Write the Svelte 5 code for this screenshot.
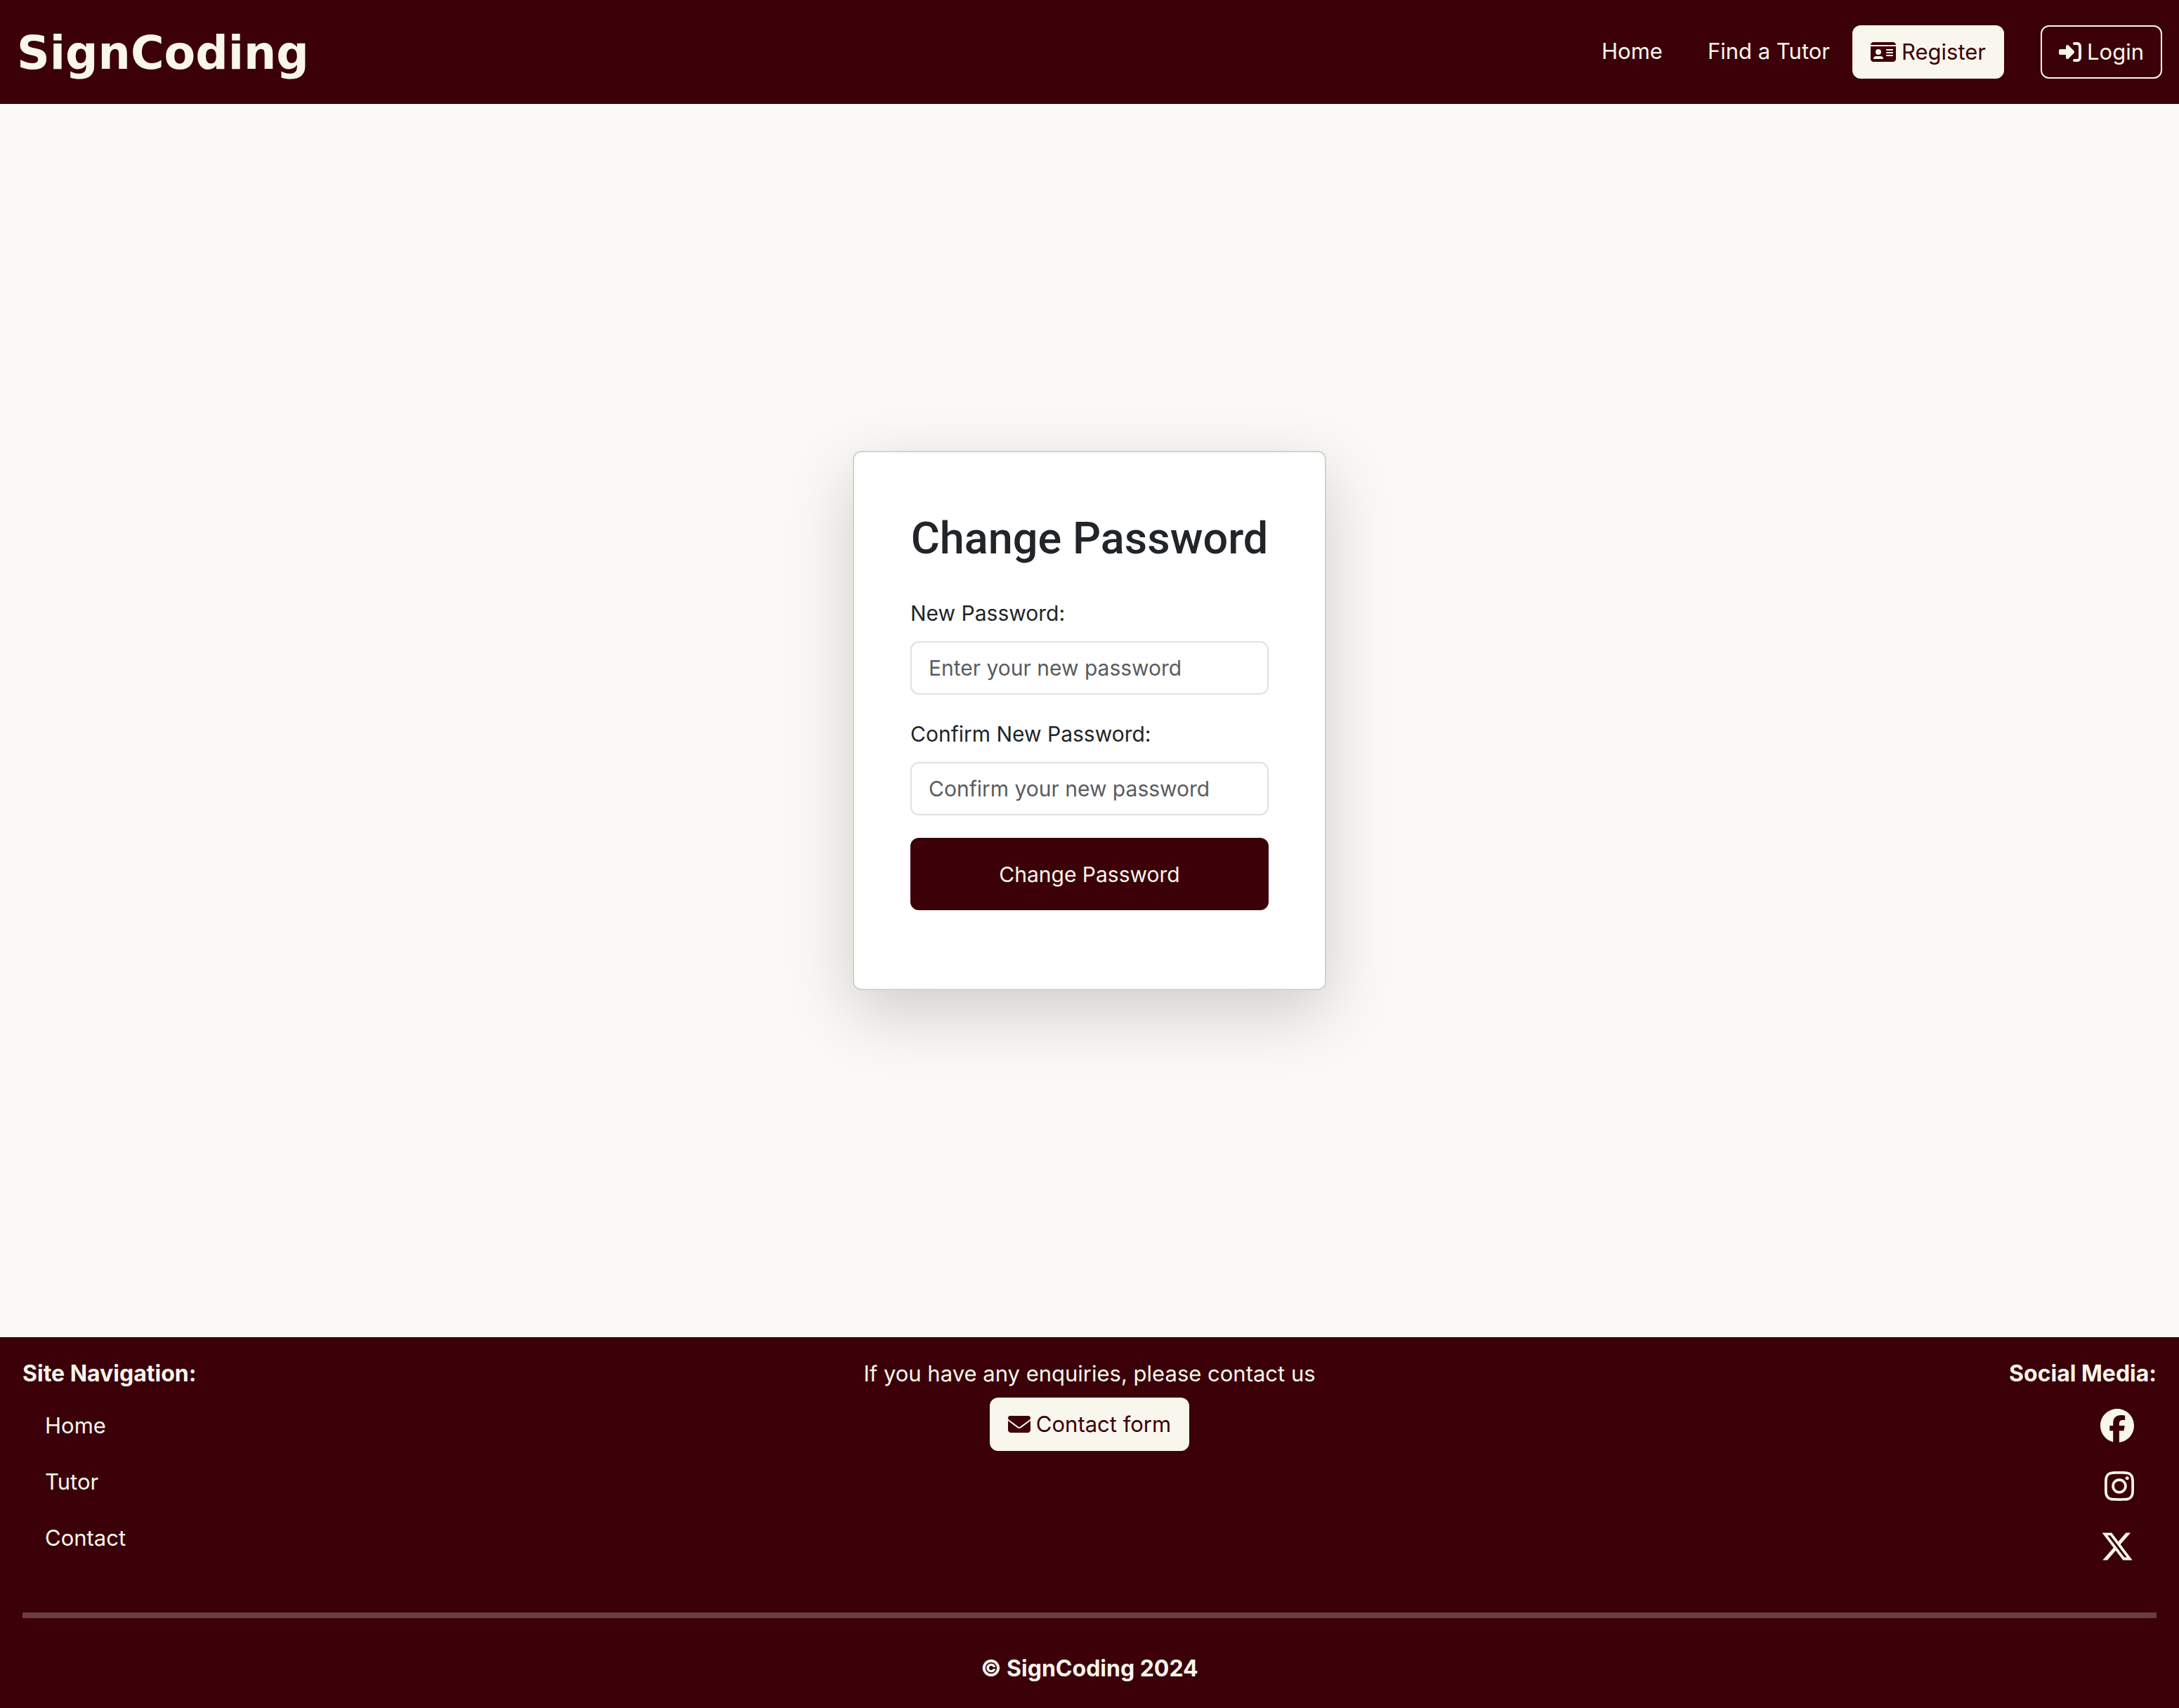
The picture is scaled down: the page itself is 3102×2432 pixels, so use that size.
<script>
  const footerLinks = ['Home', 'Tutor', 'Contact'];

  const socials = [
    {
      name: 'Facebook',
      viewBox: '0 0 512 512',
      path: 'M512 256C512 114.6 397.4 0 256 0S0 114.6 0 256C0 376 82.7 476.8 194.2 504.5V334.2H141.4V256h52.8V222.3c0-87.1 39.4-127.5 125-127.5c16.2 0 44.2 3.2 55.7 6.4V172c-6-.6-16.5-1-29.6-1c-42 0-58.2 15.9-58.2 57.2V256h83.6l-14.4 78.2H287V510.1C413.8 494.8 512 386.9 512 256h0z'
    },
    {
      name: 'Instagram',
      viewBox: '0 0 448 512',
      path: 'M224.1 141c-63.6 0-114.9 51.3-114.9 114.9s51.3 114.9 114.9 114.9S339 319.5 339 255.9 287.7 141 224.1 141zm0 189.6c-41.1 0-74.7-33.5-74.7-74.7s33.5-74.7 74.7-74.7 74.7 33.5 74.7 74.7-33.6 74.7-74.7 74.7zm146.4-194.3c0 14.9-12 26.8-26.8 26.8-14.9 0-26.8-12-26.8-26.8s12-26.8 26.8-26.8 26.8 12 26.8 26.8zm76.1 27.2c-1.7-35.9-9.9-67.7-36.2-93.9-26.2-26.2-58-34.4-93.9-36.2-37-2.1-147.9-2.1-184.9 0-35.8 1.7-67.6 9.9-93.9 36.1s-34.4 58-36.2 93.9c-2.1 37-2.1 147.9 0 184.9 1.7 35.9 9.9 67.7 36.2 93.9s58 34.4 93.9 36.2c37 2.1 147.9 2.1 184.9 0 35.9-1.7 67.7-9.9 93.9-36.2 26.2-26.2 34.4-58 36.2-93.9 2.1-37 2.1-147.8 0-184.8zM398.8 388c-7.8 19.6-22.9 34.7-42.6 42.6-29.5 11.7-99.5 9-132.1 9s-102.7 2.6-132.1-9c-19.6-7.8-34.7-22.9-42.6-42.6-11.7-29.5-9-99.5-9-132.1s-2.6-102.7 9-132.1c7.8-19.6 22.9-34.7 42.6-42.6 29.5-11.7 99.5-9 132.1-9s102.7-2.6 132.1 9c19.6 7.8 34.7 22.9 42.6 42.6 11.7 29.5 9 99.5 9 132.1s2.7 102.7-9 132.1z'
    },
    {
      name: 'X',
      viewBox: '0 0 512 512',
      path: 'M389.2 48h70.6L305.6 224.2 487 464H345L233.7 318.6 106.5 464H35.8L200.7 275.5 26.8 48H172.4L272.9 180.9 389.2 48zM364.4 421.8h39.1L151.1 88h-42L364.4 421.8z'
    }
  ];
</script>

<div class="page">
  <header>
    <a class="brand" href="#home">SignCoding</a>
    <nav aria-label="Main">
      <a class="nav-link" href="#home">Home</a>
      <a class="nav-link" href="#tutors">Find a Tutor</a>
      <a class="btn solid" href="#register">
        <svg viewBox="0 0 576 512" aria-hidden="true"><path d="M0 96l576 0c0-35.3-28.7-64-64-64L64 32C28.7 32 0 60.7 0 96zm0 32L0 416c0 35.3 28.7 64 64 64l448 0c35.3 0 64-28.7 64-64l0-288L0 128zM64 405.3c0-29.5 23.9-53.3 53.3-53.3l117.3 0c29.5 0 53.3 23.9 53.3 53.3c0 5.9-4.8 10.7-10.7 10.7L74.7 416c-5.9 0-10.7-4.8-10.7-10.7zM176 192a64 64 0 1 1 0 128 64 64 0 1 1 0-128zm176 16c0-8.8 7.2-16 16-16l128 0c8.8 0 16 7.2 16 16s-7.2 16-16 16l-128 0c-8.8 0-16-7.2-16-16zm0 64c0-8.8 7.2-16 16-16l128 0c8.8 0 16 7.2 16 16s-7.2 16-16 16l-128 0c-8.8 0-16-7.2-16-16zm0 64c0-8.8 7.2-16 16-16l128 0c8.8 0 16 7.2 16 16s-7.2 16-16 16l-128 0c-8.8 0-16-7.2-16-16z" /></svg>
        <span>Register</span>
      </a>
      <a class="btn outline" href="#login">
        <svg viewBox="0 0 512 512" aria-hidden="true"><path d="M217.9 105.9L340.7 228.7c7.2 7.2 11.3 17.1 11.3 27.3s-4.1 20.1-11.3 27.3L217.9 406.1c-6.4 6.4-15 9.9-24 9.9c-18.7 0-33.9-15.2-33.9-33.9l0-62.1L32 320c-17.7 0-32-14.3-32-32l0-64c0-17.7 14.3-32 32-32l128 0 0-62.1c0-18.7 15.2-33.9 33.9-33.9c9 0 17.6 3.6 24 9.9zM352 416l64 0c17.7 0 32-14.3 32-32l0-256c0-17.7-14.3-32-32-32l-64 0c-17.7 0-32-14.3-32-32s14.3-32 32-32l64 0c53 0 96 43 96 96l0 256c0 53-43 96-96 96l-64 0c-17.7 0-32-14.3-32-32s14.3-32 32-32z" /></svg>
        <span>Login</span>
      </a>
    </nav>
  </header>

  <main>
    <form class="card">
      <h1>Change Password</h1>
      <div class="field">
        <label for="new-password">New Password:</label>
        <input id="new-password" type="password" placeholder="Enter your new password" />
      </div>
      <div class="field">
        <label for="confirm-password">Confirm New Password:</label>
        <input id="confirm-password" type="password" placeholder="Confirm your new password" />
      </div>
      <button type="submit">Change Password</button>
    </form>
  </main>

  <footer>
    <div class="columns">
      <nav class="site-nav" aria-labelledby="site-nav-title">
        <h2 id="site-nav-title">Site Navigation:</h2>
        <ul>
          {#each footerLinks as link}
            <li><a href={`#${link.toLowerCase()}`}>{link}</a></li>
          {/each}
        </ul>
      </nav>
      <div class="contact">
        <p>If you have any enquiries, please contact us</p>
        <a class="btn solid" href="#contact">
          <svg viewBox="0 0 512 512" aria-hidden="true"><path d="M48 64C21.5 64 0 85.5 0 112c0 15.1 7.1 29.3 19.2 38.4L236.8 313.6c11.4 8.5 27 8.5 38.4 0L492.8 150.4c12.1-9.1 19.2-23.3 19.2-38.4c0-26.5-21.5-48-48-48L48 64zM0 176L0 384c0 35.3 28.7 64 64 64l384 0c35.3 0 64-28.7 64-64l0-208L294.4 339.2c-22.8 17.1-54 17.1-76.8 0L0 176z" /></svg>
          <span>Contact form</span>
        </a>
      </div>
      <div class="social">
        <h2>Social Media:</h2>
        <ul>
          {#each socials as social}
            <li>
              <a href={`#${social.name.toLowerCase()}`} aria-label={social.name}>
                <svg viewBox={social.viewBox} aria-hidden="true"><path d={social.path} /></svg>
              </a>
            </li>
          {/each}
        </ul>
      </div>
    </div>
    <hr />
    <p class="copyright">© SignCoding 2024</p>
  </footer>
</div>

<style>
  :global(body) {
    margin: 0;
  }

  .page {
    --maroon: #3b0008;
    --cream: #f9f6ed;
    display: flex;
    flex-direction: column;
    min-height: 100vh;
    background: #faf9f5;
    color: #212529;
    font-family: Inter, 'Liberation Sans', sans-serif;
    font-size: 31px;
    line-height: 48px;
  }

  .page *,
  .page {
    box-sizing: border-box;
  }

  a {
    color: inherit;
    text-decoration: none;
  }

  svg {
    display: block;
    fill: currentColor;
  }

  header,
  footer {
    background: var(--maroon);
    color: var(--cream);
  }

  header {
    display: flex;
    align-items: center;
    justify-content: space-between;
    padding: 36px 24px;
  }

  .brand {
    padding-top: 4px;
    font-family: 'DejaVu Sans', sans-serif;
    font-size: 65px;
    font-weight: 700;
    line-height: 72px;
  }

  header nav {
    display: flex;
    align-items: center;
  }

  .nav-link {
    padding: 0 32px 2px;
  }

  .btn {
    display: inline-flex;
    align-items: center;
    gap: 8px;
    padding: 12px 24px;
    border: 2px solid var(--cream);
    border-radius: 12px;
  }

  .btn svg {
    height: 32px;
  }

  .solid {
    background: var(--cream);
    color: var(--maroon);
  }

  .outline {
    margin-left: 52px;
  }

  main {
    display: flex;
    flex: 1;
    align-items: center;
    justify-content: center;
  }

  .card {
    display: flex;
    flex-direction: column;
    gap: 32px;
    width: 100%;
    max-width: 674px;
    padding: 80px 80px 112px;
    background: #fff;
    border: 2px solid #d2d2d2;
    border-radius: 12px;
    box-shadow: 0 32px 96px rgba(0, 0, 0, 0.176);
    font-size: 30px;
  }

  h1 {
    margin: 0 0 12px;
    padding-top: 4px;
    font-family: Roboto, 'Liberation Sans', sans-serif;
    font-size: 63px;
    font-weight: 500;
    line-height: 77px;
    text-align: center;
    white-space: nowrap;
  }

  .field {
    display: flex;
    flex-direction: column;
    gap: 16px;
  }

  input {
    width: 100%;
    height: 76px;
    padding: 12px 24px;
    background: #fff;
    border: 2px solid #dee2e6;
    border-radius: 12px;
    color: inherit;
    font: inherit;
  }

  input::placeholder {
    color: #595c5f;
    opacity: 1;
  }

  button {
    height: 103px;
    padding: 0 24px;
    background: var(--maroon);
    border: 0;
    border-radius: 12px;
    color: var(--cream);
    font: inherit;
  }

  footer {
    padding: 28px 32px 32px;
  }

  .columns {
    display: grid;
    grid-template-columns: 1fr auto 1fr;
  }

  h2,
  p {
    margin: 0;
  }

  h2,
  .copyright {
    font-size: 32px;
    font-weight: 700;
    line-height: inherit;
  }

  ul {
    display: flex;
    flex-direction: column;
    margin: 0;
    padding: 0;
    list-style: none;
  }

  .site-nav ul {
    gap: 32px;
    padding: 26px 32px;
  }

  .contact {
    display: flex;
    flex-direction: column;
    align-items: center;
    gap: 10px;
  }

  .social {
    display: flex;
    flex-direction: column;
    align-items: flex-end;
  }

  .social ul {
    align-items: flex-end;
    gap: 38px;
    padding: 26px 32px 70px;
  }

  .social svg {
    height: 48px;
  }

  hr {
    height: 8px;
    margin: 0 0 48px;
    background: var(--cream);
    border: 0;
    opacity: 0.25;
  }

  .copyright {
    text-align: center;
  }
</style>
